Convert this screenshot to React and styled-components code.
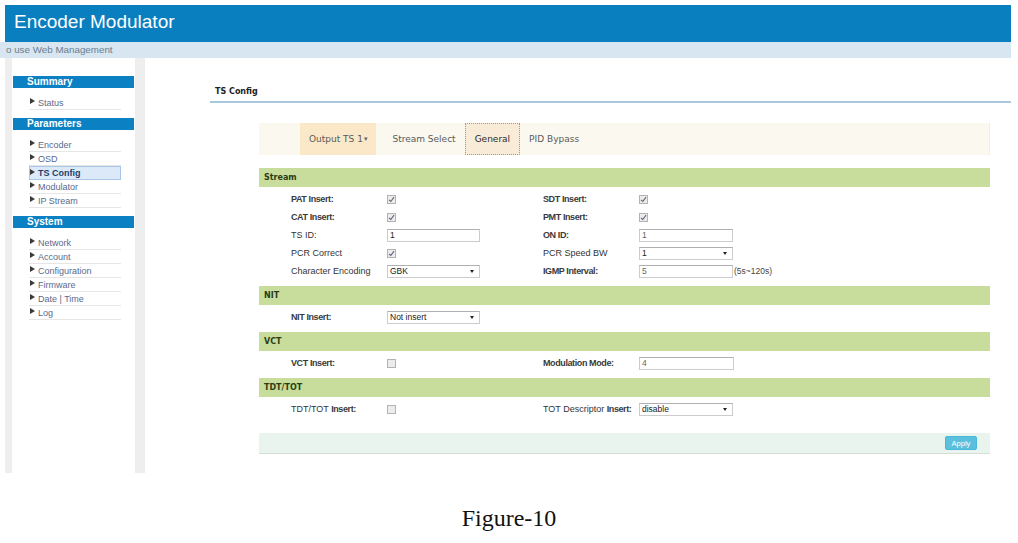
import React from "react";
import styled, { createGlobalStyle } from "styled-components";

const GlobalStyle = createGlobalStyle`
  body {
    margin: 0;
    background: #fff;
    font-family: "Liberation Sans", Arial, sans-serif;
  }
`;

const Page = styled.div`
  width: 1018px;
  height: 543px;
  padding-top: 5px;
  box-sizing: border-box;
  overflow: hidden;
`;

const Header = styled.div`
  margin: 0 7px 0 5px;
  height: 37px;
  padding: 6px 0 0 9px;
  box-sizing: border-box;
  background: #0a7fc0;
  color: #fff;
  font-size: 19px;
  line-height: 22px;
`;

const SubBar = styled.div`
  margin-right: 7px;
  height: 16px;
  padding-left: 6px;
  background: #d7e6f1;
  color: #6b7d8e;
  font-size: 9.8px;
  line-height: 16px;
`;

const Body = styled.div`
  display: flex;
  height: 415px;
`;

const Sidebar = styled.div`
  width: 140px;
  margin-left: 5px;
  padding: 0 10px 0 7px;
  box-sizing: border-box;
  background: #eeeeee;
`;

const SideInner = styled.div`
  height: 100%;
  padding-top: 18px;
  box-sizing: border-box;
  background: #fff;
`;

const SideTitle = styled.div`
  margin: 0 1px;
  height: 12px;
  padding-left: 14px;
  background: #0b80c3;
  color: #fff;
  font-size: 10px;
  font-weight: bold;
  line-height: 12px;
`;

const SideList = styled.div`
  padding: 8px 0 8px 17px;
`;

const SideItem = styled.div`
  display: flex;
  align-items: center;
  width: 92px;
  height: 14px;
  box-sizing: border-box;
  padding-left: ${(p) => (p.$active ? "0" : "1px")};
  border: ${(p) => (p.$active ? "1px solid #a9c6e6" : "none")};
  border-bottom: 1px solid ${(p) => (p.$active ? "#a9c6e6" : "#e6e6e6")};
  background: ${(p) => (p.$active ? "#dce9f8" : "transparent")};
  color: ${(p) => (p.$active ? "#1f3d68" : "#5a6a8c")};
  font-size: 9px;
  font-weight: ${(p) => (p.$active ? "bold" : "normal")};
`;

const Arrow = styled.span`
  width: 0;
  height: 0;
  margin: -3px 3px 0 0;
  border-left: 5px solid #3a3a3a;
  border-top: 3px solid transparent;
  border-bottom: 3px solid transparent;
`;

const Main = styled.div`
  flex: 1;
  margin-right: 7px;
`;

const PageTitle = styled.div`
  margin: 25px 0 0 65px;
  padding: 2px 0 3px 5px;
  border-bottom: 2px solid #a7c8dd;
  font-family: "DejaVu Sans", Verdana, sans-serif;
  font-size: 8px;
  font-weight: bold;
  line-height: 13px;
  color: #222;
`;

const Form = styled.div`
  margin: 20px 21px 0 114px;
`;

const TabBar = styled.div`
  display: flex;
  height: 32px;
  padding-left: 41px;
  background: #faf8ef;
  border-right: 1px solid #f0ede2;
  font-family: "DejaVu Sans", Verdana, sans-serif;
  font-size: 9px;
`;

const Tab = styled.div`
  display: flex;
  align-items: center;
  padding: 0 9px;
  box-sizing: border-box;
  color: ${(p) => (p.$current ? "#2a2a2a" : "#5a5a5a")};
  background: ${(p) => (p.$current ? "#f8ecd8" : p.$menu ? "#fbe8c9" : "transparent")};
  border: ${(p) => (p.$current ? "1px dotted #999" : "none")};
  margin-right: ${(p) => (p.$menu ? "7px" : "0")};
`;

const Caret = styled.span`
  margin-left: 1px;
  font-size: 7px;
  color: #666;
`;

const Section = styled.div`
  margin-top: ${(p) => (p.$first ? "13px" : "0")};
`;

const SectionHead = styled.div`
  height: 19px;
  padding-left: 5px;
  background: #c8dc9c;
  color: #2b3d16;
  font-family: "DejaVu Sans", Verdana, sans-serif;
  font-size: 8px;
  font-weight: bold;
  line-height: 19px;
`;

const Rows = styled.div`
  display: grid;
  grid-template-columns: 96px 156px 96px 1fr;
  grid-auto-rows: 18px;
  align-items: center;
  padding: 3px 0 6px 32px;
  font-size: 9px;
  color: #333;
`;

const Label = styled.div`
  white-space: nowrap;
`;

const B = styled.b`
  font-size: 9px;
  letter-spacing: -0.4px;
  color: #3a3a3a;
`;

const Cell = styled.div`
  display: flex;
  align-items: center;
`;

const Box = styled.span`
  display: flex;
  align-items: center;
  justify-content: center;
  width: 9px;
  height: 9px;
  box-sizing: border-box;
  border: 1px solid #b3b3b3;
  background: #ececec;
`;

const Field = styled.div`
  display: flex;
  align-items: center;
  justify-content: space-between;
  width: ${(p) => p.$w || 93}px;
  height: 13px;
  padding: 0 5px 0 2px;
  box-sizing: border-box;
  border: 1px solid #ccc;
  border-top-color: #b0b0b0;
  background: #fff;
  font-size: 8.5px;
  color: ${(p) => (p.$muted ? "#666" : "#222")};
`;

const DropArrow = styled.span`
  width: 0;
  height: 0;
  border-top: 3px solid #222;
  border-left: 2.5px solid transparent;
  border-right: 2.5px solid transparent;
`;

const Hint = styled.span`
  margin-left: 1px;
  font-size: 8.5px;
  color: #444;
`;

const Footer = styled.div`
  display: flex;
  align-items: center;
  justify-content: flex-end;
  height: 20px;
  margin-top: 9px;
  padding-right: 13px;
  background: #eaf4ee;
  border-bottom: 1px solid #d5dfd8;
`;

const ApplyButton = styled.button`
  width: 32px;
  height: 14px;
  padding: 0;
  border: 1px solid #46b8da;
  border-radius: 2px;
  background: #5bc0de;
  color: #fff;
  font-family: "Liberation Sans", Arial, sans-serif;
  font-size: 7.5px;
`;

const Caption = styled.div`
  margin-top: 33px;
  text-align: center;
  font-family: "Liberation Serif", "Times New Roman", serif;
  font-size: 24px;
  line-height: 24px;
  color: #111;
`;

const Check = ({ on }) => (
  <Box>
    {on && (
      <svg width="7" height="7" viewBox="0 0 7 7">
        <path d="M1 3.8 L2.8 5.5 L6 1.2" fill="none" stroke="#5b6478" strokeWidth="1.1" />
      </svg>
    )}
  </Box>
);

const Input = ({ value, w, muted }) => (
  <Field $w={w} $muted={muted}>
    {value}
  </Field>
);

const Select = ({ value, w }) => (
  <Field $w={w}>
    {value}
    <DropArrow />
  </Field>
);

const menu = [
  { title: "Summary", items: ["Status"] },
  { title: "Parameters", items: ["Encoder", "OSD", "TS Config", "Modulator", "IP Stream"] },
  {
    title: "System",
    items: ["Network", "Account", "Configuration", "Firmware", "Date | Time", "Log"],
  },
];

const sections = [
  {
    name: "Stream",
    rows: [
      [<B>PAT Insert:</B>, <Check on />, <B>SDT Insert:</B>, <Check on />],
      [<B>CAT Insert:</B>, <Check on />, <B>PMT Insert:</B>, <Check on />],
      ["TS ID:", <Input value="1" />, <B>ON ID:</B>, <Input value="1" w={94} muted />],
      ["PCR Correct", <Check on />, "PCR Speed BW", <Select value="1" w={94} />],
      [
        "Character Encoding",
        <Select value="GBK" />,
        <B>IGMP Interval:</B>,
        <>
          <Input value="5" w={94} muted />
          <Hint>(5s~120s)</Hint>
        </>,
      ],
    ],
  },
  {
    name: "NIT",
    rows: [[<B>NIT Insert:</B>, <Select value="Not insert" />, null, null]],
  },
  {
    name: "VCT",
    rows: [[<B>VCT Insert:</B>, <Check />, <B>Modulation Mode:</B>, <Input value="4" w={95} muted />]],
  },
  {
    name: "TDT/TOT",
    rows: [
      [
        <>
          TDT/TOT <B>Insert:</B>
        </>,
        <Check />,
        <>
          TOT Descriptor <B>Insert:</B>
        </>,
        <Select value="disable" w={94} />,
      ],
    ],
  },
];

export default function App() {
  return (
    <Page>
      <GlobalStyle />
      <Header>Encoder Modulator</Header>
      <SubBar>o use Web Management</SubBar>
      <Body>
        <Sidebar>
          <SideInner>
            {menu.map((group) => (
              <div key={group.title}>
                <SideTitle>{group.title}</SideTitle>
                <SideList>
                  {group.items.map((item) => (
                    <SideItem key={item} $active={item === "TS Config"}>
                      <Arrow />
                      {item}
                    </SideItem>
                  ))}
                </SideList>
              </div>
            ))}
          </SideInner>
        </Sidebar>
        <Main>
          <PageTitle>TS Config</PageTitle>
          <Form>
            <TabBar>
              <Tab $menu>
                Output TS 1<Caret>▾</Caret>
              </Tab>
              <Tab>Stream Select</Tab>
              <Tab $current>General</Tab>
              <Tab>PID Bypass</Tab>
            </TabBar>
            {sections.map((sec, i) => (
              <Section key={sec.name} $first={i === 0}>
                <SectionHead>{sec.name}</SectionHead>
                <Rows>
                  {sec.rows.map((row, r) =>
                    row.map((cell, c) =>
                      c % 2 === 0 ? (
                        <Label key={`${r}-${c}`}>{cell}</Label>
                      ) : (
                        <Cell key={`${r}-${c}`}>{cell}</Cell>
                      )
                    )
                  )}
                </Rows>
              </Section>
            ))}
            <Footer>
              <ApplyButton>Apply</ApplyButton>
            </Footer>
          </Form>
        </Main>
      </Body>
      <Caption>Figure-10</Caption>
    </Page>
  );
}
